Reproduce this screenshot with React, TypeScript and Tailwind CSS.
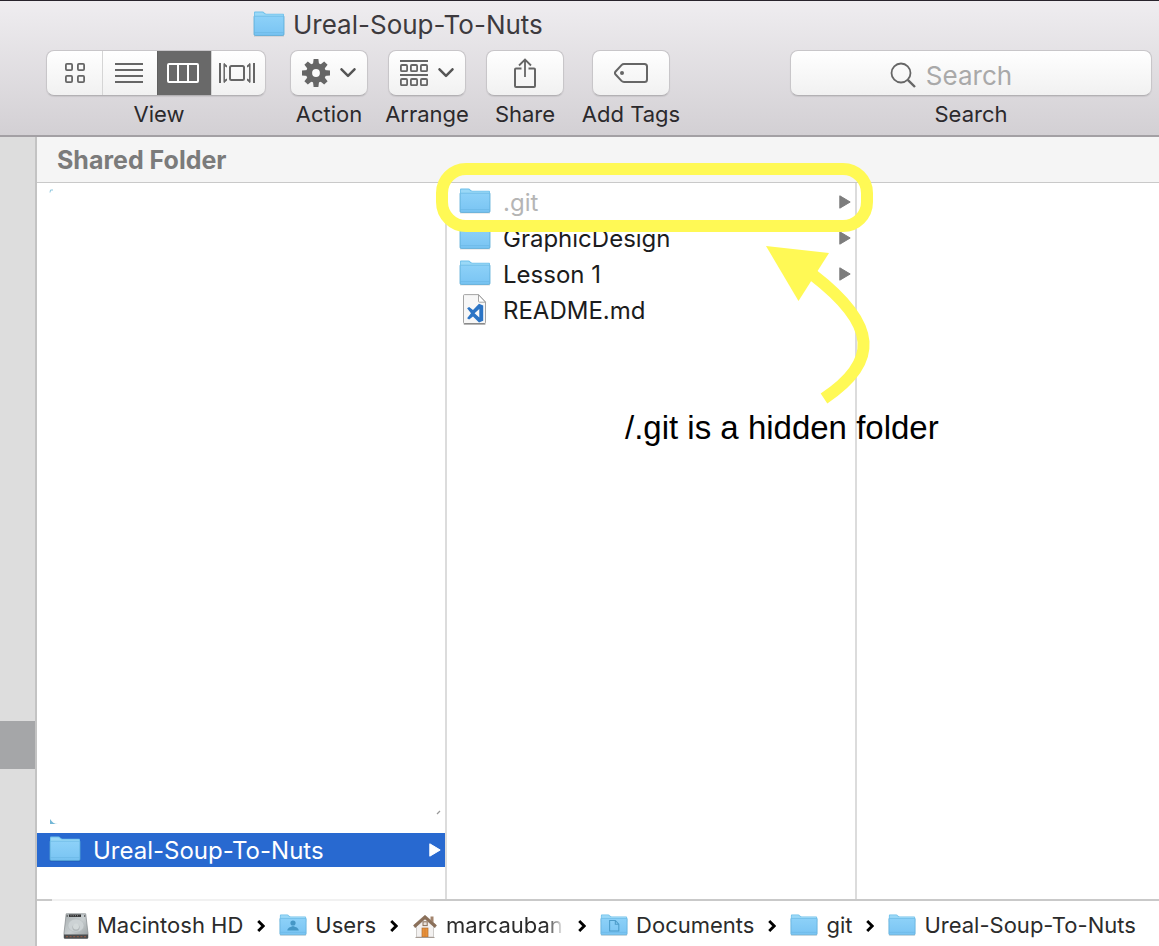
import { useState, type ReactNode } from "react";

function Folder({ className = "h-[27px] w-[32px]", children }: { className?: string; children?: ReactNode }) {
  return (
    <svg viewBox="0 0 32 27" className={"shrink-0 " + className} preserveAspectRatio="none" aria-hidden="true">
      <defs>
        <linearGradient id="folderFront" x1="0" y1="0" x2="0" y2="1">
          <stop offset="0" stopColor="#8dd1f8" />
          <stop offset="1" stopColor="#79c4f3" />
        </linearGradient>
      </defs>
      <path d="M1 24.8h30" stroke="#000" strokeOpacity=".18" strokeWidth="1.2" />
      <path d="M1 2C1 1.100 1.500.6 2.300.6h7.200c1.600 0 1.700 2.200 3.800 2.200h16.500c.8 0 1.200.4 1.200 1.200V9H1z" fill="#6fc0ea" />
      <path d="M1.800 2.200c0-.5.3-.8.8-.8h6.800c1.200 0 1.500 2.200 3.900 2.200h16.300c.4 0 .6.200.6.6v1.500H1.800z" fill="#9ad8f7" />
      <path d="M1 5.200h30v18c0 .8-.4 1.200-1.200 1.200H2.200c-.8 0-1.200-.4-1.200-1.200z" fill="url(#folderFront)" />
      <path d="M1 5.200v18c0 .8.4 1.200 1.200 1.200h27.600c.8 0 1.200-.4 1.200-1.200v-18" fill="none" stroke="#57a9d6" strokeWidth=".8" />
      <path d="M1.400 5.200h29.200" stroke="#68b7e2" strokeWidth=".7" />
      <path d="M1.400 21.600h29.200" stroke="#69b6e4" strokeWidth=".7" />
      {children}
    </svg>
  );
}

function CodeFile() {
  return (
    <svg viewBox="0 0 32 32" className="h-8 w-8 shrink-0" aria-hidden="true">
      <path d="M5.500.6h14.200l6.800 7.400v20.400c0 .7-.4 1.100-1 1.100h-20c-.6 0-1-.4-1-1.100V1.600c0-.6.4-1 1-1z" fill="#f7f7f7" stroke="#9a9a9a" strokeWidth=".9" />
      <path d="M4.800 30h21.600" stroke="#6f6f6f" strokeWidth="1" />
      <path d="M19.500.8l6.900 7.400h-5.900c-.7 0-1-.3-1-1z" fill="#fff" stroke="#9a9a9a" strokeWidth=".9" />
      <path fillRule="evenodd" d="M20 9.800l4.200 1.800v15.200L20 28.500l-6-5.900-3.900 3-2-1.300 3.900-5-3.900-5 2-1.300 3.900 3zM20.300 15l-4.700 4.200 4.700 4.200z" fill="#2b74c5" />
    </svg>
  );
}

function Disk() {
  return (
    <svg viewBox="0 0 26 26" className="h-[26px] w-[26px] shrink-0" aria-hidden="true">
      <defs>
        <linearGradient id="disk" x1="0" y1="0" x2="1" y2="1">
          <stop offset="0" stopColor="#a7adaf" />
          <stop offset=".5" stopColor="#c9cfd1" />
          <stop offset="1" stopColor="#959b9d" />
        </linearGradient>
      </defs>
      <path d="M3.200.8h19.500l2.300 19.500v4.200c0 .7-.4 1-1 1H2c-.7 0-1-.3-1-1v-4.200z" fill="url(#disk)" stroke="#8d9294" strokeWidth=".8" />
      <path d="M1 21.500h24v3c0 .7-.4 1-1 1H2c-.7 0-1-.3-1-1z" fill="#4b4d4e" />
      <path d="M3 23.700h20" stroke="#8b5a48" strokeWidth="1.200" strokeDasharray="2 1.600" />
      <rect x="6" y="1.500" width="12" height="2.400" fill="#2a2b2c" />
      <path d="M7.500 2.700h9" stroke="#b8b8b8" strokeWidth=".8" strokeDasharray="1 1.200" />
      <ellipse cx="13" cy="12.500" rx="8" ry="6.500" fill="#ccd2d4" stroke="#b4babc" strokeWidth=".5" />
      <circle cx="13" cy="14.500" r="3.600" fill="#b1b7b9" />
      <circle cx="13" cy="13.600" r="3" fill="#d3d9da" />
      <circle cx="4.200" cy="3" r=".7" fill="#333" />
      <circle cx="21.700" cy="3" r=".7" fill="#333" />
    </svg>
  );
}

function Home() {
  return (
    <svg viewBox="0 0 26 26" className="h-[26px] w-[26px] shrink-0" aria-hidden="true">
      <path d="M18.500 3.500h3v6L18.500 7z" fill="#a3846c" />
      <path d="M4.500 13L13 5l8.500 8v11h-17z" fill="#f3f1f0" stroke="#c4c0bc" strokeWidth=".8" />
      <path d="M13 2.200L1.500 12.300l1.600 2.400L13 6l9.900 8.700 1.600-2.400z" fill="#8b7059" stroke="#7c6350" strokeWidth=".5" />
      <rect x="11" y="8.800" width="4.200" height="3.800" fill="#e9e2dc" stroke="#8b7059" strokeWidth="1" />
      <rect x="10" y="15" width="6" height="9" fill="#e8913a" stroke="#b06d33" strokeWidth=".7" />
      <path d="M13 15.300v8.500" stroke="#c97a30" strokeWidth=".6" />
      <path d="M3.500 24.500h19" stroke="#a59c94" strokeWidth="1" />
    </svg>
  );
}

const Triangle = ({ className }: { className: string }) => (
  <svg viewBox="0 0 12 14" className={"h-3.5 w-3 shrink-0 " + className} aria-hidden="true">
    <path d="M.8.8L11.200 7 .8 13.200z" fill="currentColor" stroke="currentColor" strokeWidth="1" strokeLinejoin="round" />
  </svg>
);

const Caret = () => (
  <svg viewBox="0 0 16 10" className="h-[10px] w-4" aria-hidden="true">
    <path d="M1.500 1.300L8 7.800l6.500-6.500" fill="none" stroke="#555" strokeWidth="2.500" strokeLinecap="round" strokeLinejoin="round" />
  </svg>
);

const Crumb = () => (
  <svg viewBox="0 0 8 12" className="h-3 w-2 shrink-0" aria-hidden="true">
    <path d="M1.200 1L6.200 6l-5 5" fill="none" stroke="#000" strokeWidth="2.800" />
  </svg>
);

function Gear() {
  return (
    <svg viewBox="-14 -14 28 28" className="h-7 w-7" aria-hidden="true">
      {[0, 45, 90, 135].map((a) => (
        <path key={a} d="M-2.400-14h4.800l.7 6v16l-.7 6h-4.800l-.7-6V-8z" transform={`rotate(${a})`} fill="#666" />
      ))}
      <circle r="10" fill="#666" />
      <circle r="3.900" fill="#fafafa" />
    </svg>
  );
}

const icons = {
  grid: (
    <svg viewBox="0 0 20 20" className="h-5 w-5" fill="none" stroke="#666" strokeWidth="1.800" aria-hidden="true">
      <rect x=".9" y=".9" width="6.200" height="6.200" rx="1" />
      <rect x="12.900" y=".9" width="6.200" height="6.200" rx="1" />
      <rect x=".9" y="12.900" width="6.200" height="6.200" rx="1" />
      <rect x="12.900" y="12.900" width="6.200" height="6.200" rx="1" />
    </svg>
  ),
  list: (
    <svg viewBox="0 0 28 20" className="h-5 w-7" stroke="#666" strokeWidth="2" aria-hidden="true">
      <path d="M0 1h28M0 7h28M0 13h28M0 19h28" />
    </svg>
  ),
  columns: (
    <svg viewBox="0 0 32 20" className="h-5 w-8" fill="none" stroke="#fff" strokeWidth="2" aria-hidden="true">
      <rect x="1" y="1" width="30" height="18" rx="1" />
      <path d="M11 1v18M21 1v18" />
    </svg>
  ),
  flow: (
    <svg viewBox="0 0 36 20" className="h-5 w-9" fill="none" stroke="#666" strokeWidth="2" aria-hidden="true">
      <path d="M1 0v20M35 0v20" />
      <path d="M5.200.5v19M30.800.5v19" strokeWidth="1.500" />
      <path d="M5 0l3 2.500v2L5 3zM5 20l3-2.500v-2L5 17zM31 0l-3 2.500v2L31 3zM31 20l-3-2.500v-2L31 17z" fill="#666" stroke="none" />
      <rect x="11" y="3" width="14" height="14" rx="1.500" />
    </svg>
  ),
  arrange: (
    <svg viewBox="0 0 28 26" className="h-[26px] w-7" fill="none" stroke="#666" strokeWidth="1.800" aria-hidden="true">
      <path d="M0 1h28M0 15h28" />
      {[5, 19].map((y) =>
        [0.9, 10.9, 20.9].map((x) => <rect key={`${x}-${y}`} x={x} y={y} width="6.200" height="6.200" rx="1" />),
      )}
    </svg>
  ),
  share: (
    <svg viewBox="0 0 22 30" className="h-[30px] w-[22px]" fill="none" stroke="#666" strokeWidth="2" aria-hidden="true">
      <path d="M7.500 10.500H2c-.7 0-1 .3-1 1V28c0 .7.3 1 1 1h18c.7 0 1-.3 1-1V11.500c0-.7-.3-1-1-1h-5.500" />
      <path d="M11 19V1.500M5 7.500l6-6 6 6" strokeWidth="1.800" />
    </svg>
  ),
  tag: (
    <svg viewBox="0 0 34 20" className="h-5 w-[34px]" aria-hidden="true">
      <path d="M10 1h20.500c1.800 0 2.500.8 2.500 2.500v13c0 1.700-.7 2.500-2.500 2.500H10c-1 0-1.800-.4-2.500-1.100L1.600 11.500c-.8-.9-.8-2.100 0-3L7.500 2.100C8.200 1.400 9 1 10 1z" fill="none" stroke="#666" strokeWidth="2" />
      <circle cx="8" cy="10" r="2" fill="#666" />
    </svg>
  ),
};

const views = [
  { id: "Icons", icon: icons.grid, width: "w-[55px]" },
  { id: "List", icon: icons.list, width: "w-[55px] pr-0.5" },
  { id: "Columns", icon: icons.columns, width: "w-[54px] pr-1" },
  { id: "Cover Flow", icon: icons.flow, width: "w-[54px] pr-1" },
];

const control =
  "rounded-lg border border-[#c8c6c9] border-b-[#b3b1b4] bg-linear-to-b from-white to-[#f1f1f1] shadow-[0_1px_1px_rgba(0,0,0,0.08)]";
const caption = "text-[22px] leading-7 whitespace-nowrap text-[#2b292c]";

function Tool({ label, children }: { label: string; children: ReactNode }) {
  const id = "tool-" + label.replace(" ", "-");
  return (
    <div className="flex w-[78px] shrink-0 flex-col items-center gap-1">
      <button aria-labelledby={id} className={"flex h-[46px] w-full items-center justify-center gap-2.5 " + control}>
        {children}
      </button>
      <span id={id} className={caption}>{label}</span>
    </div>
  );
}

function Row({ name, faded, file, children }: { name: string; faded?: boolean; file?: boolean; children?: ReactNode }) {
  return (
    <li className="relative">
      <button className="flex h-9 w-full items-center gap-3 pr-1 pb-px pl-3 text-left">
        {file ? <CodeFile /> : <Folder />}
        <span className={"flex-1 truncate pt-0.5 " + (faded ? "text-[#b5b5b5]" : "text-[#1c1c1c]")}>{name}</span>
        {!file && <Triangle className="text-[#7d7d7d]" />}
      </button>
      {children}
    </li>
  );
}

export default function App() {
  const [view, setView] = useState("Columns");
  return (
    <div className="flex min-h-screen flex-col overflow-hidden bg-white font-['Inter','Noto_Sans',sans-serif] text-[24px]">
      <header className="border-t border-b-2 border-t-[#28232c] border-b-[#a3a0a4] bg-linear-to-b from-[#efedf0] to-[#d3d0d4]">
        <h1 className="flex h-[49px] items-center gap-2 pb-[3px] pl-[253px] text-[26px] text-[#3d3a3e]">
          <Folder />
          Ureal-Soup-To-Nuts
        </h1>
        <div className="flex pr-[7px] pb-[7px] pl-[46px]">
          <div className="flex shrink-0 flex-col items-center gap-1" role="group" aria-labelledby="view-label">
            <div className={"flex h-[46px] overflow-hidden " + control}>
              {views.map((v, i) => (
                <button
                  key={v.id}
                  aria-label={v.id}
                  aria-pressed={view === v.id}
                  onClick={() => setView(v.id)}
                  className={
                    "flex items-center justify-center " +
                    v.width +
                    (i > 0 ? " border-l border-[#d5d5d5]" : "") +
                    (view === v.id ? " border-l-[#5f5f5f] bg-[#696969]" : "")
                  }
                >
                  {v.icon}
                </button>
              ))}
            </div>
            <span id="view-label" className={"pl-1.5 " + caption}>View</span>
          </div>
          <div className="ml-6 flex gap-5">
            <Tool label="Action">
              <Gear />
              <Caret />
            </Tool>
            <Tool label="Arrange">
              {icons.arrange}
              <Caret />
            </Tool>
            <Tool label="Share">{icons.share}</Tool>
          </div>
          <div className="ml-7">
            <Tool label="Add Tags">{icons.tag}</Tool>
          </div>
          <div className="ml-[120px] flex flex-1 flex-col items-center gap-1">
            <div className={"flex h-[46px] w-full items-center justify-center gap-2.5 pt-1 pr-10 " + control}>
              <svg viewBox="0 0 26 26" className="h-[26px] w-[26px] shrink-0" fill="none" stroke="#666" strokeWidth="1.800" aria-hidden="true">
                <circle cx="11" cy="11" r="9.500" />
                <path d="M17.800 17.800L25 25" strokeWidth="2.400" />
              </svg>
              <input
                id="search"
                type="text"
                placeholder="Search"
                className="field-sizing-content bg-transparent text-[26px] outline-none placeholder:text-[#a9a9a9]"
              />
            </div>
            <label htmlFor="search" className={caption}>Search</label>
          </div>
        </div>
      </header>

      <div className="flex flex-1">
        <aside className="flex w-[37px] shrink-0 flex-col justify-end border-r-2 border-[#c3c3c3] bg-[#dddddd] pb-[177px]">
          <div className="h-12 bg-[#a5a6a8]" />
        </aside>
        <main className="flex min-w-0 flex-1 flex-col">
          <h2 className="flex h-[46px] items-center border-b border-[#c9c9c9] bg-[#f5f5f5] pt-0.5 pl-5 text-[25px] font-bold text-[#7b7b7b]">
            Shared Folder
          </h2>
          <div className="flex flex-1">
            <div className="flex w-[410px] shrink-0 flex-col border-r-2 border-[#dcdcdc]">
              <div className="flex flex-1 flex-col justify-between pt-1.5 pr-1 pb-2 pl-3">
                <svg viewBox="0 0 6 4" className="h-1 w-1.5" aria-hidden="true">
                  <path d="M1 3.500L1.500 1H4" fill="none" stroke="#8cc6dd" />
                </svg>
                <div className="flex items-start justify-between">
                  <svg viewBox="0 0 10 6" className="mt-1.5 h-1.5 w-2.5" aria-hidden="true">
                    <path d="M1 0v5h8C5 5 3 3 1 0z" fill="#74b7d6" />
                  </svg>
                  <svg viewBox="0 0 6 6" className="-mt-1 h-1.5 w-1.5" aria-hidden="true">
                    <path d="M2 5l3-3" stroke="#999" strokeWidth="1.200" />
                  </svg>
                </div>
              </div>
              <button className="mb-8 flex h-[34px] items-center gap-3 bg-[#2869d0] pr-1 pb-px pl-3 text-left text-white">
                <Folder />
                <span className="flex-1 truncate pt-0.5">Ureal-Soup-To-Nuts</span>
                <Triangle className="text-white" />
              </button>
            </div>

            <ul className="w-[410px] shrink-0 border-r-2 border-[#dcdcdc] pt-px">
              <Row name=".git" faded>
                <div className="pointer-events-none absolute -top-[21px] -right-[18px] -left-[11px] z-10 h-[69px] rounded-[30px] border-[12px] border-[#fff955]" />
              </Row>
              <Row name="GraphicDesign">
                <svg viewBox="760 240 116 170" className="pointer-events-none absolute top-5 left-[313px] z-10 h-[170px] w-[116px]" aria-hidden="true">
                  <path d="M766 246l63 7-30.500 48z" fill="#fff955" />
                  <path d="M824 398.500C879 362 878 325 813 275" fill="none" stroke="#fff955" strokeWidth="12" />
                </svg>
                <p className="pointer-events-none absolute top-[188px] left-[178px] z-10 font-['Liberation_Sans',sans-serif] text-[33px] leading-10 whitespace-nowrap text-black">
                  /.git is a hidden folder
                </p>
              </Row>
              <Row name="Lesson 1" />
              <Row name="README.md" file />
            </ul>
            <div className="flex-1" />
          </div>

          <div className="flex h-0.5">
            <div className="w-[15px] bg-[#c9c9c9]" />
            <div className="w-[378px] bg-[#f1f1f1]" />
            <div className="flex-1 bg-[#c9c9c9]" />
          </div>
          <nav aria-label="Path" className="flex h-[45px] items-center gap-3.5 pt-1 pl-[26px] text-[22px] whitespace-nowrap text-[#2b2b2b]">
            <a href="#hd" className="flex items-center gap-2"><Disk />Macintosh HD</a>
            <Crumb />
            <a href="#users" className="flex items-center gap-2">
              <Folder className="h-[23px] w-7">
                <circle cx="16" cy="10.500" r="3" fill="#4597c6" />
                <path d="M9.500 19.500c0-3 2.500-4 6.500-5.500 4 1.500 6.500 2.500 6.500 5.500z" fill="#4597c6" />
              </Folder>
              Users
            </a>
            <Crumb />
            <a href="#home" className="flex items-center gap-2">
              <Home />
              <span className="w-[118px] overflow-hidden mask-r-from-85%">marcaubane</span>
            </a>
            <Crumb />
            <a href="#documents" className="flex items-center gap-2">
              <Folder className="h-[23px] w-7">
                <path d="M11 7.500h6.500l4 4.500v8H11zM17.500 7.500V12h4" fill="none" stroke="#4c9cca" strokeWidth="1.200" />
              </Folder>
              Documents
            </a>
            <Crumb />
            <a href="#git" className="flex items-center gap-2"><Folder className="h-[23px] w-7" />git</a>
            <Crumb />
            <a href="#ureal" className="flex items-center gap-2"><Folder className="h-[23px] w-7" />Ureal-Soup-To-Nuts</a>
          </nav>
        </main>
      </div>
    </div>
  );
}
